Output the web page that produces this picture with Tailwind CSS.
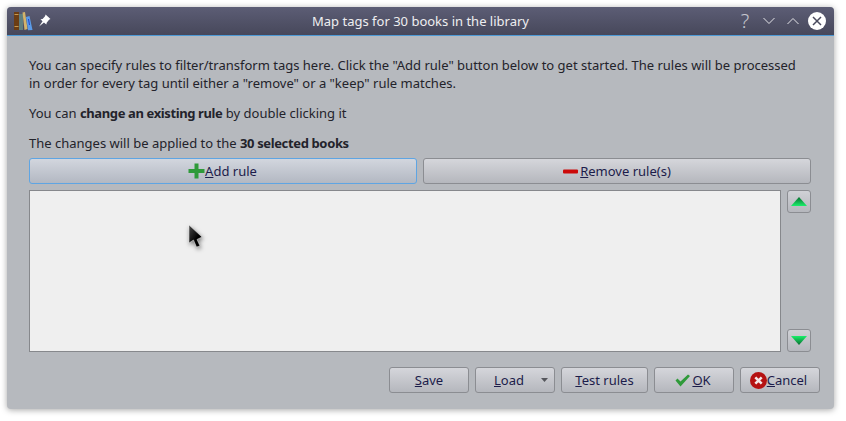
<!doctype html>
<html><head><meta charset="utf-8">
<script src="https://cdn.jsdelivr.net/npm/@tailwindcss/browser@4"></script>
</head>
<body class="w-[846px] h-[421px] bg-white overflow-hidden relative font-['Noto_Sans',sans-serif] text-[13px] leading-[18px] text-[#23232b]">
<div class="mt-[7px] ml-[7px] w-[827px] h-[402px] rounded-[4px] bg-[#b6b9be] shadow-[0_1px_6px_rgba(0,0,0,0.35)] flex flex-col overflow-hidden">
  <div class="h-[29px] shrink-0 flex items-center border-b border-[#4d9ad6] bg-gradient-to-b from-[#5c5d75] to-[#47485b] text-[#f0f0f2] relative">
    <svg class="ml-[6px] mt-[-1px]" width="20" height="20" viewBox="0 0 20 20"><rect x="1" y="1" width="5" height="18" fill="#6b3d14"/><rect x="1.500" y="3" width="4" height="1" fill="#c89a50"/><rect x="1.500" y="15" width="4" height="1" fill="#c89a50"/><rect x="6" y="3" width="4" height="16" fill="#5f7f80"/><path d="M9.500 1.500l2.500-.5 2.500 17-3 1z" fill="#d3b36b"/><path d="M13 6l3.500-1 3 14-4.500.300z" fill="#5b9be8"/><path d="M15.500 8l1 6" stroke="#1b3fd0" stroke-width="1"/></svg>
    <svg class="ml-[5px] mt-[-1px]" width="13" height="13" viewBox="0 0 12 12"><path d="M7 .5l4.500 4-1.300.7-2.200 2.800-.3 1.700L5.500 7.800 1 11.500 4.200 6.800 2.300 4.800l1.900-.2L6.500 2z" fill="#fff"/></svg>
    <span class="absolute left-0 right-0 text-center text-[13px] text-[#eeeef0] pointer-events-none">Map tags for 30 books in the library</span>
    <div class="ml-auto flex items-center">
      <span class="w-[14px] text-center text-[20px] leading-[20px] text-[#c6c7d0] font-['Noto_Sans',sans-serif] font-light">?</span>
      <svg class="ml-[11px]" width="12" height="8" viewBox="0 0 12 8"><path d="M.5 1l5.500 5.500L11.500 1" fill="none" stroke="#e4e4e8" stroke-width="1"/></svg>
      <svg class="ml-[12px]" width="12" height="8" viewBox="0 0 12 8"><path d="M.5 7L6 1.500 11.500 7" fill="none" stroke="#e4e4e8" stroke-width="1"/></svg>
      <svg class="ml-[9px] mr-[8px]" width="18" height="18" viewBox="0 0 18 18"><circle cx="9" cy="9" r="9" fill="#fff"/><path d="M5 5l8 8M13 5l-8 8" stroke="#4a4b5e" stroke-width="1.500"/></svg>
    </div>
  </div>
  <div class="flex-1 flex flex-col pl-[22px] pr-[14px]">
    <p class="mt-[20px] w-[775px]">You can specify rules to filter/transform tags here. Click the "Add rule" button below to get started. The rules will be processed in order for every tag until either a "remove" or a "keep" rule matches.</p>
    <p class="mt-[12px]">You can <b class="font-bold tracking-[-0.38px]">change an existing rule</b> by double clicking it</p>
    <p class="mt-[12px]">The changes will be applied to the <b class="font-bold tracking-[-0.36px]">30 selected books</b></p>
    <div class="mt-[6px] w-[782px] flex gap-[6px] text-[#1c1c4a]">
      <button class="flex-1 h-[26px] rounded-[3px] border border-[#5fa5e3] bg-gradient-to-b from-[#d2d6de] to-[#b3b8c2] flex items-center justify-center">
        <svg width="17" height="16" viewBox="0 0 17 16" class="ml-[-1px]"><path d="M6.500 0.500h4v5.500h6v4h-6v5.500h-4v-5.500h-6v-4h6z" fill="#2f9a3a"/></svg><span><u>A</u>dd rule</span>
      </button>
      <button class="flex-1 h-[26px] rounded-[3px] border border-[#8b8d92] bg-gradient-to-b from-[#d5d6db] to-[#b5b7bd] flex items-center justify-center">
        <svg width="16" height="5" viewBox="0 0 16 5" class="mr-[1px]"><rect width="15" height="4" y="0.500" rx="1" fill="#cc0a0a"/></svg><span><u>R</u>emove rule(s)</span>
      </button>
    </div>
    <div class="mt-[6px] flex gap-[6px] w-[782px] h-[162px]">
      <div class="flex-1 bg-[#efefef] border border-[#86888c]"></div>
      <div class="w-[24px] flex flex-col justify-between">
        <button class="h-[23px] rounded-[3px] border border-[#8b8d92] bg-gradient-to-b from-[#d0d1d6] to-[#b5b7bd] flex items-center justify-center">
          <svg width="16" height="9" viewBox="0 0 16 9"><defs><linearGradient id="u" x1="0" y1="0" x2="0" y2="1"><stop offset="0" stop-color="#0a6b30"/><stop offset="1" stop-color="#19f06a"/></linearGradient></defs><path d="M8 0l8 9H0z" fill="url(#u)"/></svg>
        </button>
        <button class="h-[23px] rounded-[3px] border border-[#8b8d92] bg-gradient-to-b from-[#d0d1d6] to-[#b5b7bd] flex items-center justify-center">
          <svg width="16" height="9" viewBox="0 0 16 9"><defs><linearGradient id="d" x1="0" y1="0" x2="0" y2="1"><stop offset="0" stop-color="#19f06a"/><stop offset="1" stop-color="#0a6b30"/></linearGradient></defs><path d="M0 0h16L8 9z" fill="url(#d)"/></svg>
        </button>
      </div>
    </div>
    <div class="mt-[15px] flex justify-end gap-[6px] text-[#1c1c4a]">
      <button class="w-[80px] h-[26px] rounded-[3px] border border-[#8b8d92] bg-gradient-to-b from-[#d5d6db] to-[#b5b7bd]"><u>S</u>ave</button>
      <button class="w-[80px] h-[26px] rounded-[3px] border border-[#8b8d92] bg-gradient-to-b from-[#d5d6db] to-[#b5b7bd] flex items-center pl-[18px] pr-[6px] justify-between"><span><u>L</u>oad</span><svg width="7" height="4" viewBox="0 0 7 4"><path d="M0 0h7L3.500 4z" fill="#55565c"/></svg></button>
      <button class="w-[87px] h-[26px] rounded-[3px] border border-[#8b8d92] bg-gradient-to-b from-[#d5d6db] to-[#b5b7bd]"><u>T</u>est rules</button>
      <button class="w-[80px] h-[26px] rounded-[3px] border border-[#8b8d92] bg-gradient-to-b from-[#d5d6db] to-[#b5b7bd] flex items-center justify-center">
        <svg width="17" height="13" viewBox="0 0 16 13" class="ml-[-3px]"><path d="M1 6.500l2-2 3 3L13.500 0.500 15.500 2 6 12.500z" fill="#2f9a3a"/></svg><span class="ml-[1px]"><u>O</u>K</span></button>
      <button class="w-[80px] h-[26px] rounded-[3px] border border-[#8b8d92] bg-gradient-to-b from-[#d5d6db] to-[#b5b7bd] flex items-center justify-center">
        <svg width="17" height="17" viewBox="0 0 16 16" class="ml-[-3px]"><circle cx="8" cy="8" r="8" fill="#b51212"/><path d="M5 5l6 6M11 5l-6 6" stroke="#f4e8e8" stroke-width="2.400"/></svg><span><u>C</u>ancel</span></button>
    </div>
  </div>
</div>
<svg class="absolute left-[185px] top-[222px] drop-shadow-[1px_2px_2px_rgba(0,0,0,0.5)]" width="22" height="28" viewBox="0 0 22 28"><defs><linearGradient id="c" x1="0" y1="0" x2="1" y2="1"><stop offset="0" stop-color="#4a4a4a"/><stop offset="0.6" stop-color="#000"/></linearGradient></defs><path d="M4 3v18l4.500-3 3 7 3.500-1-3-6.500 5-2.500z" fill="url(#c)" stroke="#eee" stroke-width="0.500"/></svg>
</body></html>
